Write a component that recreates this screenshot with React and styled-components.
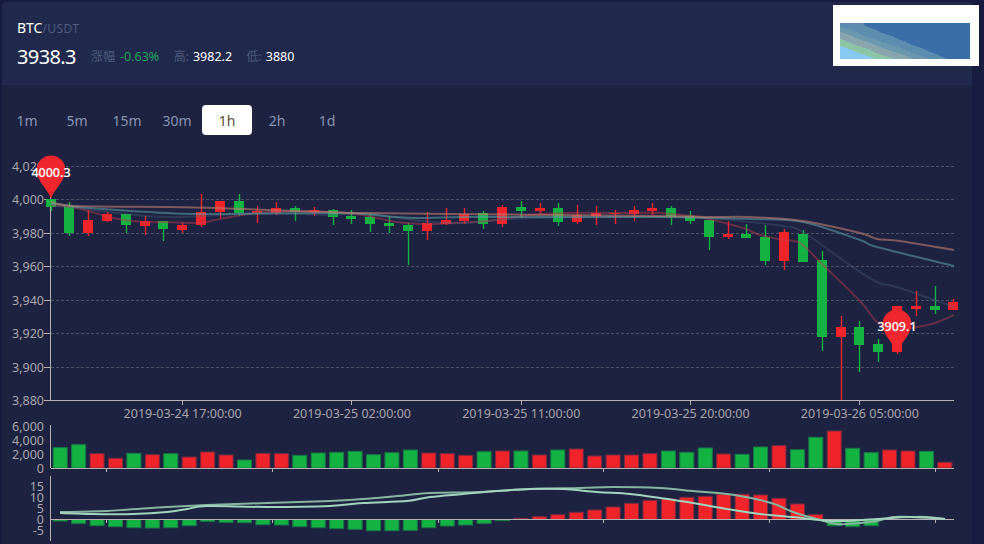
import React from 'react';
import styled, { createGlobalStyle } from 'styled-components';

const FONT = '"Noto Sans", "Noto Sans CJK SC", sans-serif';
const GREEN = '#14b143';
const RED = '#ef232a';
const AXIS = '#b8b0ae';

const GlobalStyle = createGlobalStyle`
  html, body {
    margin: 0;
    height: 544px;
    overflow: hidden;
    background: #171b3f;
    font-family: ${FONT};
  }
`;

const Page = styled.div`
  display: flex;
  padding: 2px 0 0 2px;
`;

const Panel = styled.div`
  display: flex;
  flex-direction: column;
  width: 970px;
  height: 542px;
  background: #1c2240;
  border-radius: 4px 4px 0 0;
`;

const Header = styled.header`
  display: flex;
  justify-content: space-between;
  height: 83px;
  padding-left: 15px;
  background: #20294c;
  border-radius: 4px 4px 0 0;
`;

const Summary = styled.div`
  display: flex;
  flex-direction: column;
  padding-top: 16px;
`;

const Pair = styled.div`
  height: 20px;
  line-height: 20px;
  color: #fff;
  font-size: 14px;
`;

const Quote = styled.span`
  color: #4f5a7c;
  font-size: 12px;
  letter-spacing: 0.4px;
`;

const Ticker = styled.div`
  display: flex;
  align-items: center;
  height: 28px;
  margin-top: 4px;
`;

const Price = styled.span`
  width: 74px;
  color: #fff;
  font-size: 20px;
  letter-spacing: -0.6px;
`;

const Stat = styled.span`
  margin-right: 14.5px;
  color: #4f5a7c;
  font-size: 12px;
`;

const StatValue = styled.span`
  margin-left: ${(props) => (props.$wide ? 5 : 4)}px;
  color: ${(props) => props.$color || '#fff'};
  font-size: 12.5px;
`;

const Thumb = styled.div`
  width: 146px;
  height: 61px;
  margin: 3px -7px 0 0;
  padding: 18px 9px 7px 7px;
  box-sizing: border-box;
  background: #fff;
`;

const ThumbImage = styled.svg`
  display: block;
  width: 130px;
  height: 36px;
`;

const Toolbar = styled.nav`
  display: flex;
  height: 30px;
  padding: 20px 0 5px;
`;

const PeriodButton = styled.button`
  width: 50px;
  height: 30px;
  padding: 0;
  border: 0;
  border-radius: 4px;
  background: ${(props) => (props.$active ? '#fff' : 'transparent')};
  color: ${(props) => (props.$active ? '#5c4a30' : '#8a93b0')};
  font-family: ${FONT};
  font-size: 14px;
`;

const ChartCanvas = styled.svg`
  display: block;
  width: 970px;
  height: 404px;
  overflow: visible;
`;

const AxisLabel = styled.text`
  fill: #a9a6ab;
  font-family: ${FONT};
  font-size: 12.5px;
  text-anchor: ${(props) => props.$anchor || 'end'};
`;

const PinLabel = styled.text`
  fill: #fff;
  stroke: rgba(255, 255, 255, 0.35);
  stroke-width: 0.4px;
  font-family: ${FONT};
  font-size: 12.5px;
  font-weight: 500;
  text-anchor: middle;
`;

const PERIODS = ['1m', '5m', '15m', '30m', '1h', '2h', '1d'];

// type, body top, body bottom, wick top, wick bottom (page pixels)
const CANDLES = [
  ['g', 199, 207, 199, 211], ['g', 206, 233, 202, 236], ['r', 220, 233, 210, 236], ['r', 214, 221, 212, 222],
  ['g', 214, 225, 214, 233], ['r', 221, 226, 216, 235], ['g', 221, 229, 221, 241], ['r', 225, 230, 223, 233],
  ['r', 212, 225, 194, 227], ['r', 201, 212, 201, 218], ['g', 201, 213, 194, 216], ['r', 211, 213, 206, 223],
  ['r', 208, 213, 202, 215], ['g', 208, 212, 206, 221], ['r', 210, 212, 207, 216], ['g', 210, 217, 209, 225],
  ['g', 216, 219, 210, 224], ['g', 217, 224, 214, 232], ['g', 223, 226, 216, 233], ['g', 225, 231, 223, 265],
  ['r', 223, 231, 212, 240], ['r', 220, 224, 208, 225], ['r', 214, 221, 208, 224], ['g', 213, 224, 211, 229],
  ['r', 207, 224, 205, 227], ['g', 207, 211, 201, 218], ['r', 208, 211, 203, 214], ['g', 208, 222, 203, 226],
  ['r', 215, 222, 205, 224], ['r', 213, 216, 206, 225], ['r', 213, 214, 210, 224], ['r', 210, 214, 206, 221],
  ['r', 208, 211, 203, 215], ['g', 208, 217, 206, 225], ['g', 216, 221, 211, 224], ['g', 220, 237, 220, 250],
  ['r', 234, 237, 221, 239], ['g', 234, 238, 224, 238], ['g', 237, 261, 225, 265], ['r', 232, 261, 229, 270],
  ['g', 234, 262, 230, 262], ['g', 260, 337, 251, 351], ['r', 327, 337, 316, 400], ['g', 327, 345, 321, 372],
  ['g', 344, 352, 339, 362], ['r', 306, 352, 306, 354], ['r', 306, 309, 291, 316], ['g', 306, 310, 286, 314],
  ['r', 302, 310, 299, 310],
];

const MA30 = [[51, 202], [77, 206], [167, 207], [217, 208], [267, 210], [330, 212], [363, 213], [450, 214], [660, 216], [710, 217], [750, 217], [803, 221], [860, 233], [877, 239], [900, 241], [954, 250]];
const MA20 = [[51, 203], [77, 207], [117, 210], [167, 213], [217, 214], [330, 213], [363, 214], [413, 218], [463, 217], [530, 217], [660, 217], [710, 218], [750, 219], [803, 222], [860, 240], [877, 247], [954, 266]];
const MA10 = [[51, 205], [77, 208], [167, 217], [267, 213], [330, 215], [363, 213], [413, 220], [463, 223], [530, 218], [660, 217], [710, 218], [750, 222], [783, 226], [803, 232], [847, 263], [877, 282], [900, 288], [954, 307]];
const MA5 = [[51, 205], [77, 208], [113, 218], [143, 222], [167, 222], [200, 223], [220, 219], [267, 212], [330, 212], [363, 215], [397, 222], [430, 224], [473, 222], [497, 220], [530, 215], [570, 213], [630, 213], [660, 213], [693, 216], [713, 220], [743, 228], [760, 235], [783, 240], [800, 243], [823, 265], [860, 301], [877, 322], [893, 330], [917, 327], [935, 323], [954, 315]];

const VOLUME_TOPS = [158, 149, 176, 190, 175, 179, 176, 186, 171, 180, 195, 175, 176, 181, 174, 172, 169, 179, 173, 165, 174, 176, 181, 170, 168, 168, 180, 165, 162, 183, 180, 180, 176, 168, 172, 159, 177, 178, 156, 152, 164, 127, 108, 160, 173, 165, 168, 169, 202];
const VOLUME_TYPES = 'ggrrgrgrrrgrrgggggggrrrgrgrgrrrrrgggrggrggrggrrgr';

// bar end in the zoomed crop scale: y = 395 + v / 3, zero at 373
const MACD_ENDS = [378, 385, 392, 395, 398, 399, 398, 392, 379, 382, 383, 389, 390, 395, 398, 401, 403, 407, 407, 406, 398, 393, 390, 385, 377, 370, 365, 359, 352, 345, 336, 325, 316, 312, 307, 304, 298, 298, 300, 310, 327, 359, 392, 395, 392];

const DEA = [[60, 512], [107, 511], [167, 507], [207, 505], [267, 503], [330, 501], [363, 499], [397, 496], [430, 493], [480, 492], [530, 489], [580, 488], [613, 487], [660, 488], [693, 491], [727, 494], [760, 500], [777, 505], [793, 512], [817, 519], [837, 524], [860, 523], [877, 521], [893, 517], [910, 517], [927, 517], [945, 519]];
const DIF = [[60, 513], [93, 514], [133, 514], [167, 512], [187, 509], [207, 506], [267, 507], [330, 506], [363, 503], [407, 501], [430, 497], [463, 494], [497, 491], [530, 489], [563, 489], [597, 492], [630, 494], [660, 498], [693, 503], [727, 509], [760, 514], [793, 517], [820, 520], [843, 521], [877, 519], [910, 517], [945, 519]];

const GRID_ROWS = [
  ['4,020', 166], ['4,000', 199.5], ['3,980', 233], ['3,960', 266],
  ['3,940', 300], ['3,920', 333], ['3,900', 367], ['3,880', 400],
];
const TIME_TICKS = [
  [7, '2019-03-24 17:00:00'], [16, '2019-03-25 02:00:00'], [25, '2019-03-25 11:00:00'],
  [34, '2019-03-25 20:00:00'], [43, '2019-03-26 05:00:00'],
];
const VOLUME_LABELS = [['6,000', 426], ['4,000', 440], ['2,000', 454], ['0', 468]];
const MACD_LABELS = [['15', 486], ['10', 497], ['5', 508], ['0', 519], ['-5', 530]];
const BAND_TICKS = [3, 12, 21, 30, 39, 48];

const candleX = (i) => 51 + i * 18.81;
const bandX = (i) => 51 + i * 18.43;

// catmull-rom through the points, good enough for the smoothed echarts lines
const smoothPath = (pts) => {
  let d = `M${pts[0][0]} ${pts[0][1]}`;
  for (let i = 0; i < pts.length - 1; i += 1) {
    const p0 = pts[i - 1] || pts[i];
    const p1 = pts[i];
    const p2 = pts[i + 1];
    const p3 = pts[i + 2] || p2;
    const c1x = p1[0] + (p2[0] - p0[0]) / 6;
    const c1y = p1[1] + (p2[1] - p0[1]) / 6;
    const c2x = p2[0] - (p3[0] - p1[0]) / 6;
    const c2y = p2[1] - (p3[1] - p1[1]) / 6;
    d += `C${c1x} ${c1y} ${c2x} ${c2y} ${p2[0]} ${p2[1]}`;
  }
  return d;
};

const pinPath = (x, y) => `M${x} ${y + 29}C${x - 1.5} ${y + 21} ${x - 14.5} ${y + 11} ${x - 14.5} ${y}`
  + `A14.5 14.5 0 1 1 ${x + 14.5} ${y}C${x + 14.5} ${y + 11} ${x + 1.5} ${y + 21} ${x} ${y + 29}Z`;

// staircase area under the line from (x0, y0) down to (x1, 36), thumbnail coordinates
const stairPath = (x0, y0, x1) => {
  const slope = (36 - y0) / (x1 - x0);
  let d = `M0 36L0 ${y0 - x0 * slope}`;
  for (let x = 0; x < x1; x += 6) {
    const y = Math.round(y0 + (x + 6 - x0) * slope);
    d += `L${x + 6} ${y - 6 * slope < 0 ? 0 : y}L${x + 6} ${y}`;
  }
  return `${d}L${x1} 36Z`;
};

const Pin = ({ x, y, label }) => (
  <g>
    <path d={pinPath(x, y)} fill="#f0262e" />
    <PinLabel x={x} y={y + 6.5}>{label}</PinLabel>
  </g>
);

const PriceChart = () => (
  <g>
    {GRID_ROWS.map(([label, y]) => (
      <g key={label}>
        <line x1="51" x2="954" y1={Math.floor(y) + 0.5} y2={Math.floor(y) + 0.5} stroke="#4e5163" strokeDasharray="3 2" />
        <line x1="44" x2="51" y1={Math.floor(y) + 0.5} y2={Math.floor(y) + 0.5} stroke={AXIS} />
        <AxisLabel x="44" y={y + 4.5}>{label}</AxisLabel>
      </g>
    ))}
    <line x1="50.5" x2="50.5" y1="166" y2="400" stroke={AXIS} />
    <line x1="51" x2="954" y1="400.5" y2="400.5" stroke={AXIS} />
    {TIME_TICKS.map(([i, label]) => (
      <g key={label}>
        <line x1={Math.floor(candleX(i)) + 0.5} x2={Math.floor(candleX(i)) + 0.5} y1="400" y2="405" stroke={AXIS} />
        <AxisLabel $anchor="middle" x={candleX(i)} y="418">{label}</AxisLabel>
      </g>
    ))}
    {CANDLES.map(([type, top, bottom, wickTop, wickBottom], i) => {
      const x = candleX(i);
      const color = type === 'g' ? GREEN : RED;
      return (
        <g key={x}>
          <rect x={Math.floor(x) - 0.2} y={wickTop} width="1.4" height={wickBottom - wickTop} fill={color} />
          <rect x={Math.floor(x) - 5} y={top} width="10" height={bottom - top} fill={color} />
        </g>
      );
    })}
    <path d={smoothPath(MA5)} fill="none" stroke="#c23b4e" strokeOpacity="0.45" strokeWidth="2" />
    <path d={smoothPath(MA10)} fill="none" stroke="#4f6a85" strokeOpacity="0.3" strokeWidth="2" />
    <path d={smoothPath(MA20)} fill="none" stroke="#5fa3a8" strokeOpacity="0.55" strokeWidth="2" />
    <path d={smoothPath(MA30)} fill="none" stroke="#c07f70" strokeOpacity="0.6" strokeWidth="2" />
    <Pin x={51} y={170} label="4000.3" />
    <Pin x={897} y={324} label="3909.1" />
  </g>
);

const VolumeChart = () => (
  <g>
    {VOLUME_LABELS.map(([label, y]) => (
      <AxisLabel key={label} x="44" y={y + 4.5}>{label}</AxisLabel>
    ))}
    {VOLUME_TOPS.map((v, i) => {
      const isGreen = VOLUME_TYPES[i] === 'g';
      const top = 395 + v / 3;
      return (
        <rect
            key={bandX(i)}
            x={bandX(i) + 2.2}
            y={top}
            width="14"
            height={468 - top}
            fill={isGreen ? GREEN : RED}
            stroke={isGreen ? '#187a48' : '#7a2a40'} />
      );
    })}
    <line x1="50.5" x2="50.5" y1="425" y2="468" stroke={AXIS} />
    <line x1="51" x2="954" y1="468.5" y2="468.5" stroke={AXIS} />
    {BAND_TICKS.map((i) => (
      <line key={i} x1={Math.floor(bandX(i)) + 0.5} x2={Math.floor(bandX(i)) + 0.5} y1="468" y2="472" stroke={AXIS} />
    ))}
  </g>
);

const MacdChart = () => (
  <g>
    {MACD_LABELS.map(([label, y]) => (
      <AxisLabel key={label} x="44" y={y + 4.5}>{label}</AxisLabel>
    ))}
    {MACD_ENDS.map((v, i) => {
      const isGreen = v > 373;
      const end = 395 + v / 3;
      return (
        <rect
            key={bandX(i)}
            x={bandX(i) + 2.2}
            y={Math.min(end, 519.5)}
            width="14"
            height={Math.abs(end - 519.5)}
            fill={isGreen ? GREEN : RED}
            stroke={isGreen ? '#187a48' : '#7a2a40'} />
      );
    })}
    <line x1="50.5" x2="50.5" y1="476" y2="541" stroke={AXIS} />
    <line x1="51" x2="954" y1="519.5" y2="519.5" stroke={AXIS} />
    {BAND_TICKS.map((i) => (
      <line key={i} x1={Math.floor(bandX(i)) + 0.5} x2={Math.floor(bandX(i)) + 0.5} y1="519" y2="523" stroke={AXIS} />
    ))}
    <path d={smoothPath(DEA)} fill="none" stroke="#86b59f" strokeWidth="2" />
    <path d={smoothPath(DIF)} fill="none" stroke="#a2d3bd" strokeWidth="2" />
  </g>
);

const App = () => (
  <>
    <GlobalStyle />
    <Page>
      <Panel>
        <Header>
          <Summary>
            <Pair>BTC<Quote>/USDT</Quote></Pair>
            <Ticker>
              <Price>3938.3</Price>
              <Stat>涨幅<StatValue $wide $color="#22a35a">-0.63%</StatValue></Stat>
              <Stat>高:<StatValue>3982.2</StatValue></Stat>
              <Stat>低:<StatValue>3880</StatValue></Stat>
            </Ticker>
          </Summary>
          <Thumb>
            <ThumbImage viewBox="0 0 130 36" shapeRendering="crispEdges">
              <rect width="130" height="36" fill="#3a6ea6" />
              <path d={stairPath(18, 0, 108)} fill="#5c8cae" />
              <path d={stairPath(0, 4, 90)} fill="#6c98ad" />
              <path d={stairPath(0, 9, 73)} fill="#89a5ae" />
              <path d={stairPath(0, 16, 53)} fill="#8cc5a5" />
              <path d={stairPath(0, 23, 35)} fill="#87c9f2" />
            </ThumbImage>
          </Thumb>
        </Header>
        <Toolbar>
          {PERIODS.map((period) => (
            <PeriodButton key={period} $active={period === '1h'}>{period}</PeriodButton>
          ))}
        </Toolbar>
        <ChartCanvas viewBox="2 140 970 404">
          <PriceChart />
          <VolumeChart />
          <MacdChart />
        </ChartCanvas>
      </Panel>
    </Page>
  </>
);

export default App;
